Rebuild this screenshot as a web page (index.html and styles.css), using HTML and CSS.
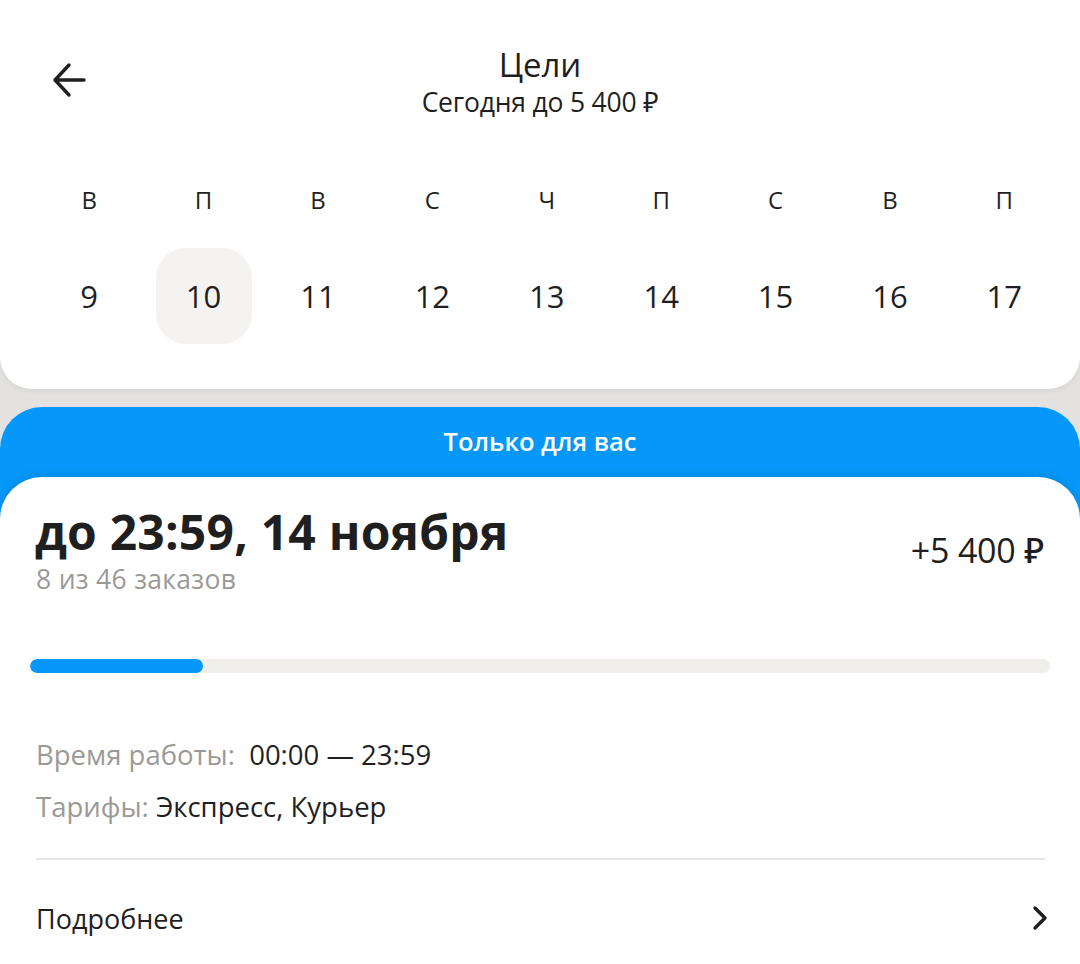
FILE: index.html
```html
<!DOCTYPE html>
<html lang="ru">
<head>
<meta charset="utf-8">
<link rel="stylesheet" href="styles.css">
</head>
<body>
<div class="screen">
  <section class="top-card">
    <header class="nav">
      <button class="back" aria-label="Назад">
        <svg width="40" height="40" viewBox="0 0 40 40"><path d="M34 20H6M19 5L5 20l14 15" fill="none" stroke="#1f1f1f" stroke-width="3.4" stroke-linecap="round" stroke-linejoin="round"/></svg>
      </button>
      <div class="nav-text">
        <div class="nav-title">Цели</div>
        <div class="nav-sub">Сегодня до 5 400 ₽</div>
      </div>
    </header>
    <div class="week">
      <div class="day"><span class="dow">В</span><span class="num">9</span></div>
      <div class="day active"><span class="dow">П</span><span class="num">10</span></div>
      <div class="day"><span class="dow">В</span><span class="num">11</span></div>
      <div class="day"><span class="dow">С</span><span class="num">12</span></div>
      <div class="day"><span class="dow">Ч</span><span class="num">13</span></div>
      <div class="day"><span class="dow">П</span><span class="num">14</span></div>
      <div class="day"><span class="dow">С</span><span class="num">15</span></div>
      <div class="day"><span class="dow">В</span><span class="num">16</span></div>
      <div class="day"><span class="dow">П</span><span class="num">17</span></div>
    </div>
  </section>

  <section class="promo">
    <div class="promo-label">Только для вас</div>
    <div class="goal-card">
      <div class="goal-head">
        <div>
          <div class="goal-title">до 23:59, 14 ноября</div>
          <div class="goal-count">8 из 46 заказов</div>
        </div>
        <div class="goal-reward">+5 400 ₽</div>
      </div>
      <div class="progress"><div class="progress-fill" style="width:17%"></div></div>
      <div class="info">
        <div class="info-row"><span class="muted">Время работы:</span>&nbsp; 00:00 — 23:59</div>
        <div class="info-row"><span class="muted">Тарифы:</span> Экспресс, Курьер</div>
      </div>
      <div class="divider"></div>
      <div class="more">
        <span>Подробнее</span>
        <svg width="20" height="28" viewBox="0 0 20 28"><path d="M5 4l10 10L5 24" fill="none" stroke="#1f1f1f" stroke-width="3.4" stroke-linecap="round" stroke-linejoin="round"/></svg>
      </div>
    </div>
  </section>
</div>
</body>
</html>
```

FILE: styles.css
```css
* { box-sizing: border-box; }
html, body { margin: 0; padding: 0; }
body {
  background: #e3e2e0;
  font-family: "Open Sans", "Noto Sans", sans-serif;
  color: #1f1f1f;
  width: 1080px;
  height: 964px;
  overflow: hidden;
}
.screen { display: flex; flex-direction: column; gap: 18px; }

.top-card {
  background: #fff;
  border-radius: 0 0 32px 32px;
  height: 389px;
  box-shadow: 0 2px 6px rgba(0,0,0,0.06);
}
.nav {
  position: relative;
  height: 150px;
  display: flex;
  justify-content: center;
  padding-top: 43px;
}
.back {
  position: absolute;
  left: 50px;
  top: 60px;
  border: 0;
  background: none;
  padding: 0;
  width: 40px;
  height: 40px;
}
.nav-text { text-align: center; }
.nav-title { font-size: 33px; line-height: 44px; }
.nav-sub { font-size: 26.5px; line-height: 30px; letter-spacing: -0.2px; }

.week {
  display: grid;
  grid-template-columns: repeat(9, 114.4px);
  padding-left: 32px;
}
.day {
  display: flex;
  flex-direction: column;
  align-items: center;
}
.dow { font-size: 24px; line-height: 40px; height: 40px; margin-top: 30px; }
.num {
  margin-top: 28px;
  width: 96px;
  height: 96px;
  border-radius: 30px;
  display: flex;
  align-items: center;
  justify-content: center;
  font-size: 31px;
}
.day.active .num { background: #f4f3f1; }

.promo {
  background: #0598fa;
  border-radius: 42px 42px 0 0;
  flex: 1;
}
.promo-label {
  color: #fff;
  font-weight: 600;
  font-size: 25.5px;
  line-height: 68px;
  height: 70px;
  text-align: center;
}
.goal-card {
  background: #fff;
  border-radius: 42px 42px 0 0;
  padding: 26px 36px 40px 36px;
  box-shadow: 0 -2px 8px rgba(0,0,0,0.12);
  height: 500px;
}
.goal-head {
  display: flex;
  justify-content: space-between;
  align-items: flex-start;
}
.goal-title {
  font-weight: 700;
  font-size: 48px;
  line-height: 58px;
  letter-spacing: 0.2px;
  margin-left: -1px;
}
.goal-count {
  color: #9b9996;
  font-size: 26.5px;
  line-height: 32px;
  margin-top: 2px;
  letter-spacing: 0.3px;
}
.goal-reward {
  font-size: 34px;
  font-weight: 500;
  margin-top: 27px;
  line-height: 40px;
  letter-spacing: -0.2px;
}
.progress {
  margin: 64px -6px 0 -6px;
  height: 14px;
  border-radius: 7px;
  background: #efeeeb;
  overflow: hidden;
}
.progress-fill {
  height: 100%;
  background: #0598fa;
  border-radius: 7px;
}
.info { margin-top: 56px; }
.info-row { font-size: 27.5px; line-height: 52px; }
.muted { color: #9b9996; }
.divider {
  height: 2px;
  background: #e6e5e3;
  margin-top: 25px;
  margin-right: -1px;
}
.more {
  display: flex;
  justify-content: space-between;
  align-items: center;
  font-size: 27px;
  height: 120px;
  padding-bottom: 4px;
}
.more svg { margin-right: -6px; }
```
